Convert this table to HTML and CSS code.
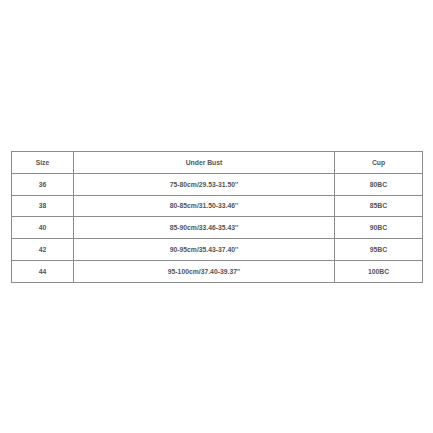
FILE: index.html
```
<!DOCTYPE html>
<html>
<head>
<meta charset="utf-8">
<link rel="stylesheet" href="styles.css">
</head>
<body>
<div class="page">
  <table class="chart">
    <colgroup>
      <col class="c-size">
      <col class="c-bust">
      <col class="c-cup">
    </colgroup>
    <tr><td>Size</td><td>Under Bust</td><td>Cup</td></tr>
    <tr><td>36</td><td>75-80cm/29.53-31.50''</td><td>80BC</td></tr>
    <tr><td>38</td><td>80-85cm/31.50-33.46''</td><td>85BC</td></tr>
    <tr><td>40</td><td>85-90cm/33.46-35.43''</td><td>90BC</td></tr>
    <tr><td>42</td><td>90-95cm/35.43-37.40''</td><td>95BC</td></tr>
    <tr><td>44</td><td>95-100cm/37.40-39.37''</td><td>100BC</td></tr>
  </table>
</div>
</body>
</html>
```
FILE: styles.css
```
html, body {
  margin: 0;
  padding: 0;
  background: #ffffff;
}
.page {
  padding: 151px 11px 0 11px;
}
.chart {
  width: 411px;
  border-collapse: collapse;
  table-layout: fixed;
  font-family: "Liberation Sans", Arial, sans-serif;
  font-size: 6.8px;
  font-weight: bold;
  color: #555555;
}
.c-size { width: 62px; }
.c-bust { width: 261px; }
.c-cup { width: 88px; }
.chart td {
  border: 1px solid #8c8c8c;
  height: 20.8px;
  padding: 0;
  text-align: center;
  vertical-align: middle;
}
```
